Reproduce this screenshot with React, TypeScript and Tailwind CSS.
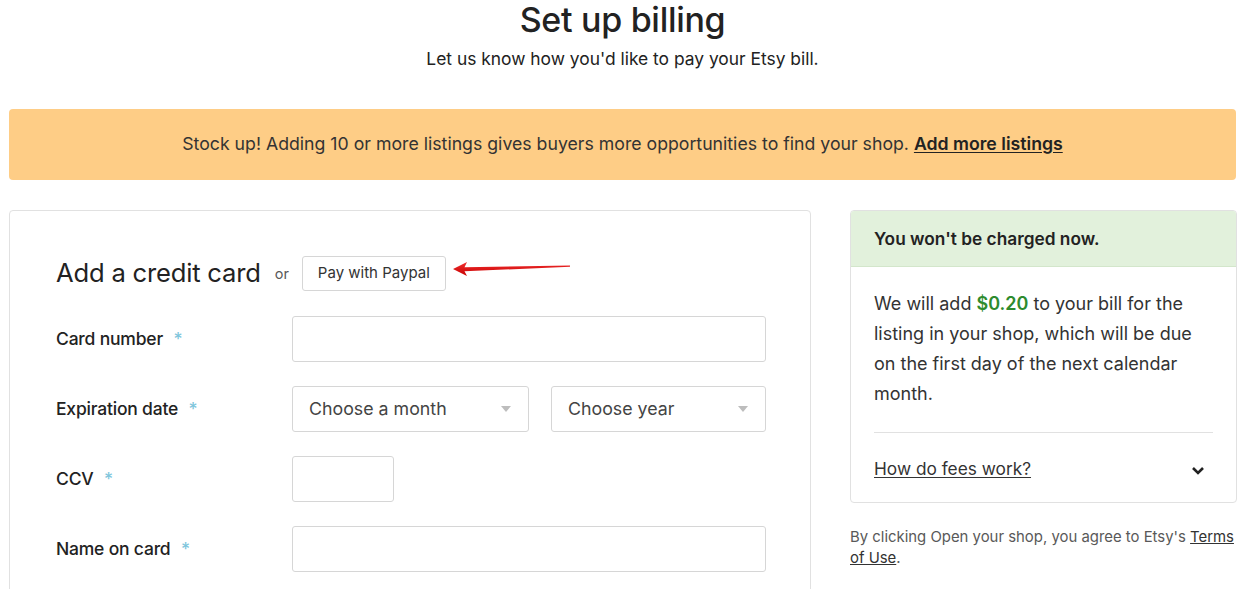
import React from "react";

function Caret() {
  return (
    <svg width="12" height="8" viewBox="0 0 12 8" className="shrink-0">
      <path d="M1 1 L11 1 L6 7 Z" fill="#bdbdbd" />
    </svg>
  );
}

function Field({ label, children }: { label: string; children: React.ReactNode }) {
  return (
    <div className="flex items-center h-[46px]">
      <div className="w-[236px] shrink-0 text-[17.5px] font-medium text-[#222] tracking-[-0.2px]">
        {label} <span className="text-[#7fc6dc] ml-[6px]">*</span>
      </div>
      {children}
    </div>
  );
}

export default function App() {
  return (
    <div
      className="w-[1245px] h-[589px] overflow-hidden bg-white text-[#222]"
      style={{ fontFamily: "Inter, 'Noto Sans', sans-serif" }}
    >
      <div className="flex flex-col items-center">
        <h1 className="text-[34px] leading-[40px] font-medium tracking-[-0.3px] text-[#222]">Set up billing</h1>
        <p className="mt-[8px] text-[17.4px] leading-[22px] text-[#222]">Let us know how you'd like to pay your Etsy bill.</p>
      </div>

      <div className="mx-[9px] mt-[39px] h-[71px] rounded-[4px] bg-[#fecd86] flex items-center justify-center text-[17.7px] text-[#333]">
        <span>
          Stock up! Adding 10 or more listings gives buyers more opportunities to find your shop.{" "}
          <span className="font-semibold underline underline-offset-2 text-[#222]">Add more listings</span>
        </span>
      </div>

      <div className="mx-[9px] mt-[30px] flex gap-[39px] items-start">
        <div className="w-[802px] h-[400px] shrink-0 border border-[#e1e1e1] rounded-[4px] pl-[46px] pt-[45px]">
          <div className="flex items-center h-[35px]">
            <h2 className="text-[25.6px] font-normal text-[#222] tracking-[-0.2px]">Add a credit card</h2>
            <span className="ml-[14px] text-[14.5px] text-[#595959]">or</span>
            <button className="ml-[13px] h-[35px] px-[15px] border border-[#d6d6d6] rounded-[3px] text-[15px] text-[#333] bg-white">
              Pay with Paypal
            </button>
            <svg width="122" height="16" viewBox="0 0 122 16" className="ml-[6px] mt-[-9px]">
              <defs>
                <linearGradient id="ar" x1="0" y1="0" x2="0" y2="1">
                  <stop offset="0" stopColor="#f03030" />
                  <stop offset="1" stopColor="#c80000" />
                </linearGradient>
              </defs>
              <path d="M1 8 L15 1 L12.5 6.3 L118 4.6 L118 5.8 L12.5 10.2 L15 15 Z" fill="url(#ar)" />
            </svg>
          </div>
          <div className="mt-[25px] flex flex-col gap-[24px]">
            <Field label="Card number">
              <div className="w-[474px] h-[46px] border border-[#d6d6d6] rounded-[3px]" />
            </Field>
            <Field label="Expiration date">
              <div className="w-[237px] h-[46px] border border-[#d6d6d6] rounded-[3px] flex items-center justify-between pl-[16px] pr-[16px] text-[17.8px] text-[#444]">
                <span>Choose a month</span>
                <Caret />
              </div>
              <div className="ml-[22px] w-[215px] h-[46px] border border-[#d6d6d6] rounded-[3px] flex items-center justify-between pl-[16px] pr-[16px] text-[17.8px] text-[#444]">
                <span>Choose year</span>
                <Caret />
              </div>
            </Field>
            <Field label="CCV">
              <div className="w-[102px] h-[46px] border border-[#d6d6d6] rounded-[3px]" />
            </Field>
            <Field label="Name on card">
              <div className="w-[474px] h-[46px] border border-[#d6d6d6] rounded-[3px]" />
            </Field>
          </div>
        </div>

        <div className="w-[387px] shrink-0">
          <div className="border border-[#e1e1e1] rounded-[4px] overflow-hidden">
            <div className="h-[56px] bg-[#e2f1dc] border-b border-[#d3e6cb] flex items-center px-[23px] text-[17.3px] font-semibold text-[#222]">
              You won't be charged now.
            </div>
            <div className="px-[23px] pt-[22px]">
              <p className="text-[18px] leading-[30px] text-[#333]">
                We will add <span className="font-semibold text-[#2e8b2e]">$0.20</span> to your bill for the listing in your shop, which will be due on the first day of the next calendar month.
              </p>
              <div className="mt-[23px] border-t border-[#e1e1e1]" />
              <div className="h-[69px] flex items-center justify-between pt-[2px]">
                <span className="text-[17.3px] underline underline-offset-2 text-[#333]">How do fees work?</span>
                <svg width="14" height="10" viewBox="0 0 14 10" className="mr-[8px] mt-[4px]">
                  <path d="M2 2 L7 7 L12 2" stroke="#222" strokeWidth="2.6" fill="none" />
                </svg>
              </div>
            </div>
          </div>
          <p className="mt-[24px] text-[14.9px] leading-[21px] text-[#595959]">
            By clicking Open your shop, you agree to Etsy's <span className="underline text-[#333]">Terms of Use</span>.
          </p>
        </div>
      </div>
    </div>
  );
}
